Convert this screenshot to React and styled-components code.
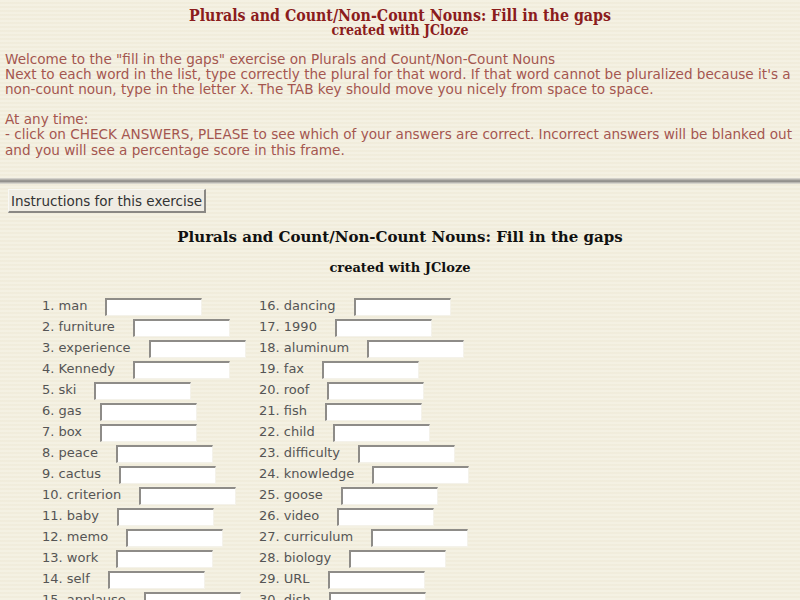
import React from "react";
import styled, { createGlobalStyle } from "styled-components";

const Global = createGlobalStyle`
  html, body { margin: 0; padding: 0; }
  body {
    width: 800px;
    height: 600px;
    overflow: hidden;
    background: #f3efdf;
  }
`;

const paper = `
  background-color: #f3efdf;
  background-image: repeating-linear-gradient(
    0deg,
    rgba(255,255,255,0.12) 0px,
    rgba(255,255,255,0.12) 2px,
    rgba(200,190,160,0.05) 2px,
    rgba(200,190,160,0.05) 4px
  );
`;

const Page = styled.div`
  width: 800px;
  height: 600px;
  display: flex;
  flex-direction: column;
  overflow: hidden;
`;

const TopFrame = styled.div`
  ${paper}
  height: 178px;
  flex: none;
  padding: 8px 5px 0 5px;
  box-sizing: border-box;
  overflow: hidden;
`;

const TopTitle = styled.div`
  font-family: "DejaVu Serif Condensed", "DejaVu Serif", serif;
  font-weight: bold;
  font-size: 15.8px;
  line-height: 15px;
  color: #8b1c1c;
  text-align: center;
`;

const TopSub = styled(TopTitle)`
  font-size: 14px;
`;

const Intro = styled.p`
  margin: 14px 0 0 0;
  font-family: "DejaVu Sans", sans-serif;
  font-size: 13.6px;
  line-height: 15.1px;
  color: #a4564f;
  hyphens: none;
`;

const NoBreak = styled.span`
  white-space: nowrap;
`;

const FrameBorder = styled.div`
  height: 6px;
  flex: none;
  background: linear-gradient(
    to bottom,
    #e2e0d8 0px,
    #c4c2bc 1px,
    #a8a6a0 2px,
    #8c8a86 3px,
    #9a9894 4px,
    #d6d4cc 5px
  );
`;

const BottomFrame = styled.div`
  ${paper}
  flex: 1;
  padding: 5px 8px 0 8px;
  overflow: hidden;
`;

const InstrButton = styled.button`
  display: block;
  height: 24px;
  padding: 0 2px 0 2px;
  margin: 0;
  font-family: "DejaVu Sans", sans-serif;
  font-size: 13.5px;
  color: #333;
  background: #efece3;
  border-top: 1px solid #f8f8f4;
  border-left: 1px solid #f8f8f4;
  border-right: 2px solid #8a8884;
  border-bottom: 2px solid #8a8884;
  cursor: pointer;
`;

const MainTitle = styled.h2`
  margin: 14px 0 0 0;
  font-family: "DejaVu Serif", serif;
  font-weight: bold;
  font-size: 15px;
  line-height: 20px;
  color: #111;
  text-align: center;
`;

const SubTitle = styled.h3`
  margin: 12px 0 0 0;
  font-family: "DejaVu Serif", serif;
  font-weight: bold;
  font-size: 13px;
  line-height: 18px;
  color: #111;
  text-align: center;
`;

const List = styled.div`
  margin: 18px 0 0 34px;
  display: grid;
  grid-template-columns: 217px auto;
`;

const Column = styled.div`
  display: flex;
  flex-direction: column;
`;

const Row = styled.div`
  height: 21px;
  display: flex;
  align-items: center;
  font-family: "DejaVu Sans", sans-serif;
  font-size: 13px;
  line-height: 21px;
  color: #555;
  white-space: nowrap;
`;

const Gap = styled.input`
  margin: 3px 0 0 18px;
  width: 97px;
  height: 18px;
  box-sizing: border-box;
  padding: 0 2px;
  background: #ffffff;
  border-top: 2px solid #8e8c88;
  border-left: 2px solid #8e8c88;
  border-right: 1px solid #f4f2ea;
  border-bottom: 1px solid #f4f2ea;
  font-family: "DejaVu Sans", sans-serif;
  font-size: 12px;
  outline: none;
`;

const left = [
  "man", "furniture", "experience", "Kennedy", "ski", "gas", "box", "peace",
  "cactus", "criterion", "baby", "memo", "work", "self", "applause",
];
const right = [
  "dancing", "1990", "aluminum", "fax", "roof", "fish", "child", "difficulty",
  "knowledge", "goose", "video", "curriculum", "biology", "URL", "dish",
];

function Item({ n, word }) {
  return (
    <Row>
      <span>{n}. {word}</span>
      <Gap type="text" aria-label={word} />
    </Row>
  );
}

export default function App() {
  return (
    <Page>
      <Global />
      <TopFrame>
        <TopTitle>Plurals and Count/Non-Count Nouns: Fill in the gaps</TopTitle>
        <TopSub>created with JCloze</TopSub>
        <Intro>
          Welcome to the "fill in the gaps" exercise on Plurals and Count/Non-Count Nouns
          <br />
          Next to each word in the list, type correctly the plural for that word. If that word cannot be pluralized because it's a <NoBreak>non-count</NoBreak> noun, type in the letter X. The TAB key should move you nicely from space to space.
          <br />
          <br />
          At any time:
          <br />
          - click on CHECK ANSWERS, PLEASE to see which of your answers are correct. Incorrect answers will be blanked out and you will see a percentage score in this frame.
        </Intro>
      </TopFrame>
      <FrameBorder />
      <BottomFrame>
        <InstrButton type="button">Instructions for this exercise</InstrButton>
        <MainTitle>Plurals and Count/Non-Count Nouns: Fill in the gaps</MainTitle>
        <SubTitle>created with JCloze</SubTitle>
        <List>
          <Column>
            {left.map((w, i) => (
              <Item key={w} n={i + 1} word={w} />
            ))}
          </Column>
          <Column>
            {right.map((w, i) => (
              <Item key={w} n={i + 16} word={w} />
            ))}
          </Column>
        </List>
      </BottomFrame>
    </Page>
  );
}
